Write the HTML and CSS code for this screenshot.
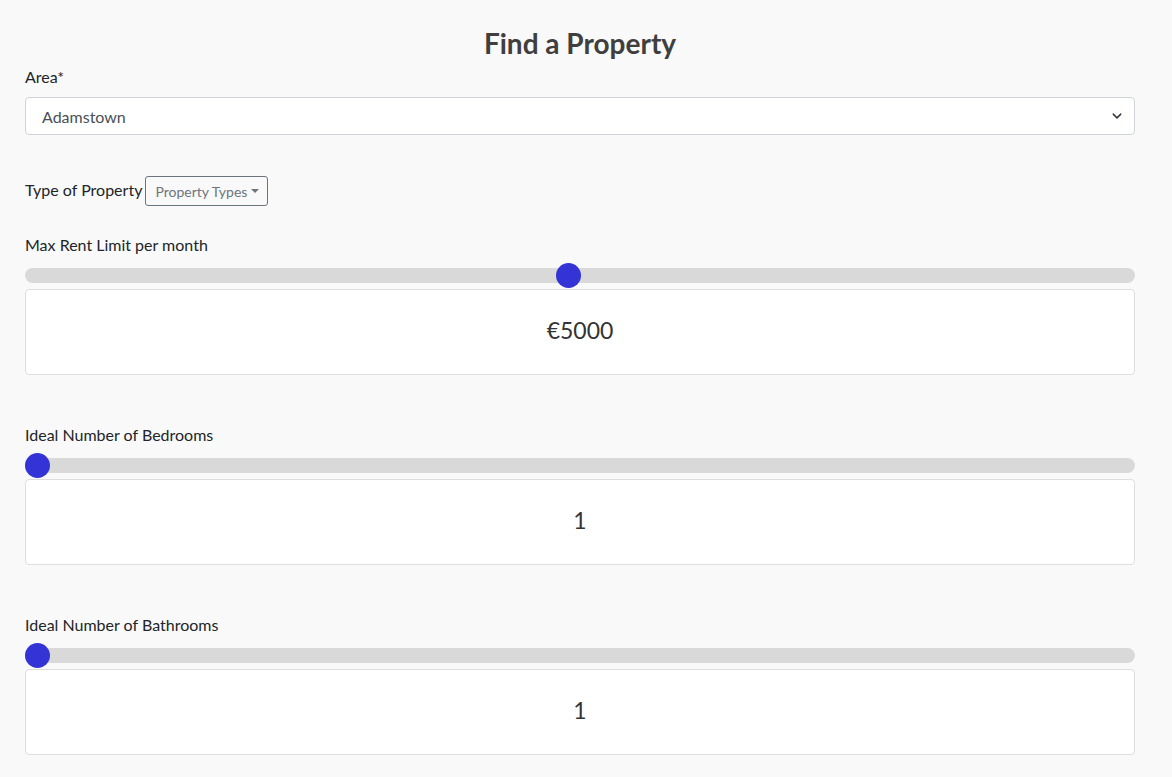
FILE: index.html
```html
<!DOCTYPE html>
<html lang="en">
<head>
<meta charset="utf-8">
<title>Find a Property</title>
<link rel="stylesheet" href="styles.css">
</head>
<body>
<main class="page">
  <h1 class="title">Find a Property</h1>

  <label class="label label-area" for="area">Area*</label>
  <div class="select-wrap">
    <select id="area" class="select">
      <option>Adamstown</option>
    </select>
    <svg class="chevron" width="12" height="10" viewBox="0 0 16 16" aria-hidden="true">
      <path d="M2 5l6 6 6-6" fill="none" stroke="#343a40" stroke-width="2.4" stroke-linecap="round" stroke-linejoin="round"/>
    </svg>
  </div>

  <div class="type-row">
    <span class="type-label">Type of Property</span>
    <button class="btn-types" type="button">Property Types<span class="caret"></span></button>
  </div>

  <section class="slider-group first">
    <label class="label" for="rent">Max Rent Limit per month</label>
    <input id="rent" class="slider" type="range" min="200" max="10000" value="5000">
    <div class="output">€5000</div>
  </section>

  <section class="slider-group">
    <label class="label" for="beds">Ideal Number of Bedrooms</label>
    <input id="beds" class="slider" type="range" min="1" max="10" value="1">
    <div class="output">1</div>
  </section>

  <section class="slider-group">
    <label class="label" for="baths">Ideal Number of Bathrooms</label>
    <input id="baths" class="slider" type="range" min="1" max="10" value="1">
    <div class="output">1</div>
  </section>
</main>
</body>
</html>
```

FILE: styles.css
```css
html, body {
  margin: 0;
  padding: 0;
  background: #f9f9f9;
}

body {
  font-family: "Lato", "Noto Sans", "Liberation Sans", sans-serif;
  font-size: 16px;
  color: #212529;
}

.page {
  width: 1110px;
  padding: 0 0 0 25px;
  display: flex;
  flex-direction: column;
}

.title {
  margin: 26px 0 0;
  font-size: 28px;
  line-height: 34px;
  font-weight: 700;
  color: #3f3f3f;
  text-align: center;
}

.label {
  display: block;
  line-height: 24px;
  color: #212529;
}

.label-area {
  margin-top: 5px;
}

.select-wrap {
  position: relative;
  margin-top: 8px;
}

.select {
  appearance: none;
  -webkit-appearance: none;
  width: 100%;
  height: 38px;
  box-sizing: border-box;
  border: 1px solid #ced4da;
  border-radius: 4px;
  background: #fff;
  padding: 0 16px;
  font-family: inherit;
  font-size: 16px;
  color: #495057;
}

.chevron {
  position: absolute;
  right: 12px;
  top: 14px;
  pointer-events: none;
}

.type-row {
  display: flex;
  align-items: center;
  gap: 3px;
  margin-top: 41px;
  height: 30px;
}

.type-label {
  line-height: 24px;
  padding-bottom: 2px;
}

.btn-types {
  display: inline-flex;
  align-items: center;
  height: 30px;
  box-sizing: border-box;
  padding: 0 8px 0 9px;
  border: 1px solid #6c757d;
  border-radius: 3px;
  background: transparent;
  font-family: inherit;
  font-size: 14px;
  color: #6c757d;
}

.caret {
  display: inline-block;
  margin-left: 4px;
  width: 0;
  height: 0;
  border-top: 4px solid #6c757d;
  border-left: 4px solid transparent;
  border-right: 4px solid transparent;
}

.slider-group {
  display: flex;
  flex-direction: column;
  margin-top: 48px;
}

.slider-group.first {
  margin-top: 27px;
}

.slider-group .label {
  margin-bottom: 11px;
}

.slider {
  -webkit-appearance: none;
  appearance: none;
  width: 100%;
  height: 15px;
  margin: 0;
  border-radius: 8px;
  background: #d9d9d9;
  outline: none;
}

.slider::-webkit-slider-thumb {
  -webkit-appearance: none;
  appearance: none;
  width: 25px;
  height: 25px;
  border-radius: 50%;
  background: #3333d6;
  border: none;
  cursor: pointer;
}

.slider::-moz-range-thumb {
  width: 25px;
  height: 25px;
  border-radius: 50%;
  background: #3333d6;
  border: none;
}

.output {
  margin-top: 6px;
  height: 86px;
  box-sizing: border-box;
  padding-bottom: 5px;
  border: 1px solid #dedede;
  border-radius: 4px;
  background: #fff;
  display: flex;
  align-items: center;
  justify-content: center;
  font-size: 23px;
  color: #333;
}
```
